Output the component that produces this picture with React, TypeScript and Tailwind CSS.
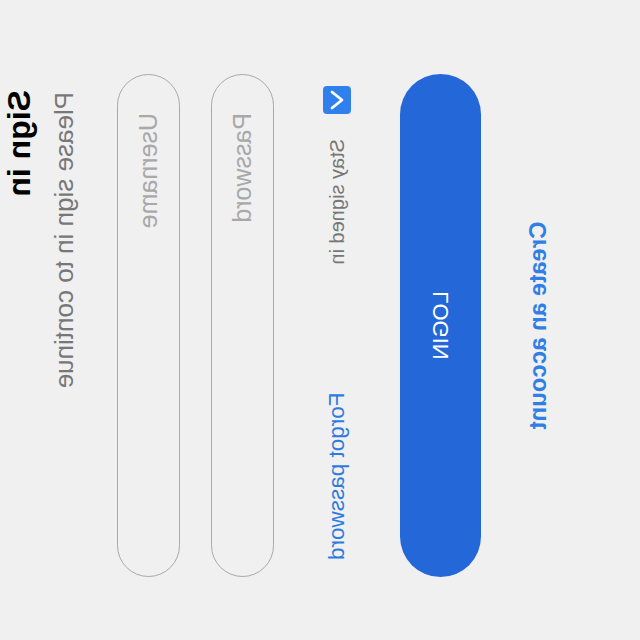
export default function App() {
  return (
    <div className="w-[640px] h-[640px] overflow-hidden bg-[#f0f0f0] font-['Liberation_Sans',Arial,sans-serif]">
      {/* the form is drawn transposed: x and y swapped */}
      <div className="w-[640px] h-[640px] origin-top-left [transform:matrix(0,1,1,0,0,0)] flex flex-col pl-[74px] pr-[63px]">
        <h1 className="pl-[16px] mt-[3px] text-[32px] leading-[32px] font-bold text-black">
          Sign in
        </h1>
        <p className="mt-[16px] pl-[18px] text-[26px] leading-[26px] text-[#777777]">
          Please sign in to continue
        </p>

        <input
          placeholder="Username"
          className="mt-[40px] block w-full h-[63px] rounded-full border-[1.5px] border-[#a9a9a9] bg-transparent pl-[38px] text-[25px] placeholder:text-[#a8a8a8] outline-none"
        />
        <input
          type="password"
          placeholder="Password"
          className="mt-[31px] block w-full h-[63px] rounded-full border-[1.5px] border-[#a9a9a9] bg-transparent pl-[38px] text-[25px] placeholder:text-[#a8a8a8] outline-none"
        />

        <div className="mt-[49px] flex items-center pl-[12px] pr-[17px]">
          <div className="w-[28px] h-[28px] rounded-[4px] bg-[#2f80ed] flex items-center justify-center">
            <svg width="28" height="28" viewBox="0 0 28 28" fill="none">
              <polyline
                points="6,9 14,19 22,9"
                stroke="white"
                strokeWidth="2.8"
                strokeLinecap="round"
                strokeLinejoin="round"
              />
            </svg>
          </div>
          <span className="ml-[25px] text-[20px] leading-[20px] text-[#777777]">
            Stay signed in
          </span>
          <a className="ml-auto text-[22.5px] leading-[22px] text-[#2e7be0]">
            Forgot password
          </a>
        </div>

        <button className="mt-[49px] h-[81px] w-full rounded-full bg-[#2467d9] text-white text-[22px]">
          LOGIN
        </button>

        <a className="mt-[45px] text-center font-bold text-[24px] leading-[23px] text-[#2f7fe6]">
          Create an account
        </a>
      </div>
    </div>
  );
}
